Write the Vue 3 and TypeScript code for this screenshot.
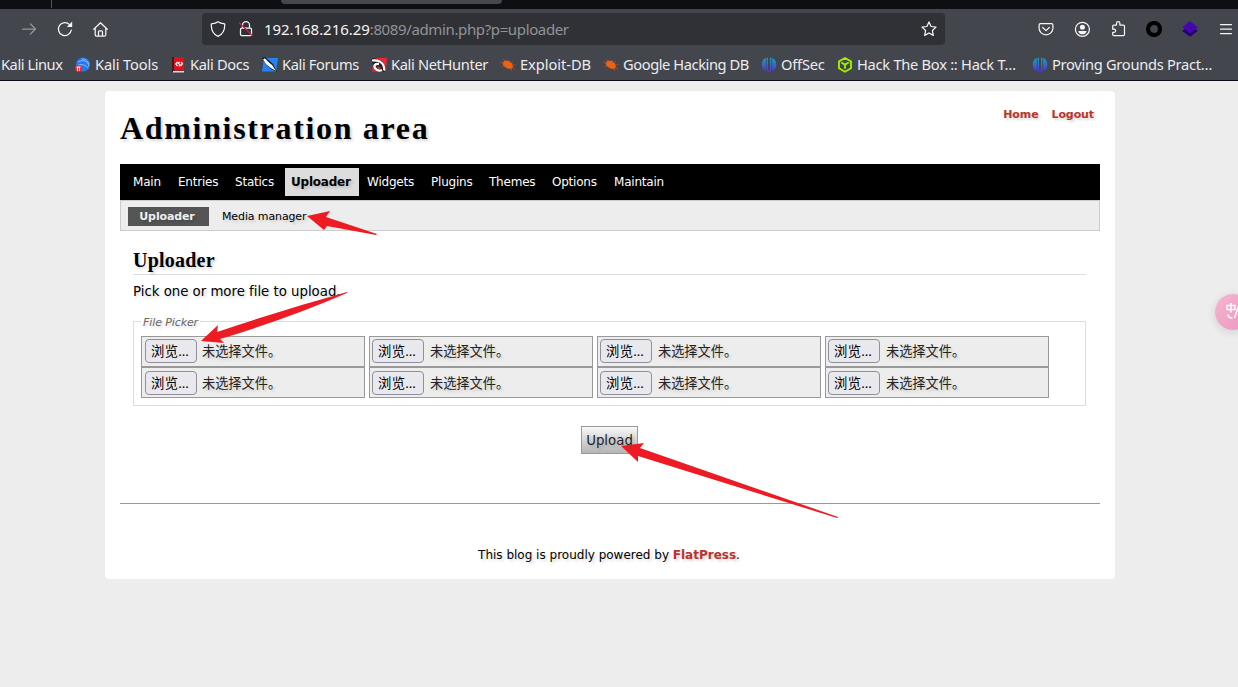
<script setup lang="ts">
interface Bookmark {
  label: string
  icon: string
  width: number
  tracking: number
}

interface Tab {
  label: string
  width: number
}

const bookmarks: Bookmark[] = [
  { label: 'Kali Linux', icon: '', width: 74, tracking: -0.45 },
  { label: 'Kali Tools', icon: 'tools', width: 95, tracking: -0.13 },
  { label: 'Kali Docs', icon: 'docs', width: 92, tracking: -0.35 },
  { label: 'Kali Forums', icon: 'forums', width: 109, tracking: -0.37 },
  { label: 'Kali NetHunter', icon: 'hunter', width: 129, tracking: -0.35 },
  { label: 'Exploit-DB', icon: 'bug', width: 103, tracking: -0.05 },
  { label: 'Google Hacking DB', icon: 'bug', width: 158, tracking: -0.42 },
  { label: 'OffSec', icon: 'offsec', width: 76, tracking: -0.2 },
  { label: 'Hack The Box :: Hack T…', icon: 'cube', width: 195, tracking: -0.27 },
  { label: 'Proving Grounds Pract…', icon: 'offsec', width: 190, tracking: -0.29 },
]

const tabs: Tab[] = [
  { label: 'Main', width: 45 },
  { label: 'Entries', width: 57 },
  { label: 'Statics', width: 56 },
  { label: 'Uploader', width: 76 },
  { label: 'Widgets', width: 64 },
  { label: 'Plugins', width: 58 },
  { label: 'Themes', width: 63 },
  { label: 'Options', width: 62 },
  { label: 'Maintain', width: 66 },
]
const activeTab = 'Uploader'
</script>

<template>
  <div class="window">
    <div class="tabstrip">
      <span class="tab-divider"></span>
      <span class="tab-current"></span>
    </div>

    <div class="toolbar">
      <div class="nav-buttons">
        <svg class="ico dim" viewBox="0 0 16 16"><path d="M1.500 8h13M9.500 3l5 5-5 5" /></svg>
        <svg class="ico" viewBox="0 0 16 16"><path d="M14.300 9.200A6.500 6.500 0 1 1 12.600 3.600" /><path class="solid" d="M15.200.6v5.400H9.800z" /></svg>
        <svg class="ico" viewBox="0 0 16 16"><path d="M.7 8.200 7.500 1.800l6.800 6.400M2.200 7.500v6.200q0 1.500 1.500 1.500h7.600q1.500 0 1.500-1.500V7.500M5.500 15V10.700q0-.9.9-.9h2.200q.9 0 .9.900V15" /></svg>
      </div>
      <div class="urlbar">
        <svg class="ico" viewBox="0 0 16 16"><path d="M8 .8C6.500 2.100 3.800 2.700 1.300 2.800 1 8.400 3 13.300 8 15.300c5-2 7-6.900 6.700-12.500C12.200 2.700 9.500 2.100 8 .8z" /></svg>
        <svg class="ico lock" viewBox="0 0 16 16"><path d="M4.500 7V4.200a3.500 3.500 0 0 1 7 0V7M3.800 7h8.400q1.300 0 1.300 1.300v5q0 1.300-1.300 1.300H3.800q-1.300 0-1.300-1.300v-5Q2.500 7 3.800 7z" /><path class="slash" d="M1.300 1.800l13 12.800" /></svg>
        <span class="url"><b>192.168.216.29</b>:8089/admin.php?p=uploader</span>
        <svg class="ico star" viewBox="0 0 16 16"><path d="M8 1l2.100 4.500 4.900.6-3.600 3.400.9 4.900L8 12l-4.300 2.400.9-4.900L1 6.100l4.900-.6z" /></svg>
      </div>
      <div class="actions">
        <svg class="ico" viewBox="0 0 16 16"><path d="M2.500 2.500h11q1.400 0 1.400 1.400v3.400a6.900 6.500 0 0 1-13.800 0V3.900q0-1.400 1.400-1.400zM4.700 6.500 8 9.600l3.300-3.100" /></svg>
        <svg class="ico" viewBox="0 0 16 16"><circle cx="8.400" cy="8.300" r="7" /><circle class="solid" cx="8.400" cy="6.200" r="2.500" /><path class="solid" d="M4.200 9.900h8.400Q11.900 13.300 8.400 13.300T4.200 9.900z" /></svg>
        <svg class="ico" viewBox="0 0 16 16"><path d="M2.700 5.200q0-1.200 1.200-1.200H6.500V2.400a1.700 1.700 0 0 1 3.400 0V4h3.400q1.200 0 1.200 1.200v8.300q0 1.200-1.200 1.200H3.900q-1.200 0-1.200-1.200v-2.100h1.300a1.600 1.600 0 0 0 0-3.200H2.700z" /></svg>
        <svg class="ico" viewBox="0 0 16 16"><circle class="ring" cx="8" cy="8" r="6" /></svg>
        <svg class="ico layers" viewBox="0 0 16 16"><path fill="#25006e" d="M0 9.800 3 8h10l3 1.800-8 6z" /><path fill="#4705b0" d="M8 0l7.700 6.300L8 12.600.3 6.300z" /></svg>
        <svg class="ico" viewBox="0 0 16 16"><path d="M2.500 3.500h11M2.500 8h11M2.500 12.500h11" /></svg>
      </div>
    </div>

    <div class="bookmarks">
      <div v-for="item in bookmarks" :key="item.label" class="bookmark" :style="{ width: item.width + 'px' }">
        <svg v-if="item.icon === 'tools'" class="fav" viewBox="0 0 16 16">
          <circle cx="8" cy="7.500" r="7" fill="#2878ed" />
          <path d="M3 5q5-3 8-.5t3 5M3 8q6-2 10.500 3.500M7 2q5 0 7 5" fill="none" stroke="#8cc0fb" stroke-width=".9" />
          <circle cx="3.500" cy="11.500" r="3.500" fill="#e72a38" /><path d="M1.500 10h4M2.500 10v4M4.500 10v4" stroke="#fff" fill="none" />
        </svg>
        <svg v-else-if="item.icon === 'docs'" class="fav" viewBox="0 0 16 16">
          <path d="M2 0h3v15H2z" fill="#30232b" /><path d="M4 0h10v13.500H4z" fill="#df101a" /><path d="M3 14h11v1.500H3z" fill="#ddd" />
          <path d="M11 5 12.500 6.800 10.500 9M7.500 5 5.800 7l1.700 2M9.500 4.800 8.300 6.200l1.700 1.600-1 1.600" stroke="#fff" stroke-width="1.200" fill="none" />
        </svg>
        <svg v-else-if="item.icon === 'forums'" class="fav" viewBox="0 0 16 16">
          <path d="M2 1h14l-2 13.500H0z" fill="#2482f4" /><path d="M0 1l3-1 8 7 4 8-6-3-5-5z" fill="#171e2a" /><path d="M1 2l9 6 4 6-5-3-5-4z" fill="#fff" /><path d="M2 2l8 8" stroke="#fff" stroke-width="2" />
        </svg>
        <svg v-else-if="item.icon === 'hunter'" class="fav" viewBox="0 0 16 16">
          <path d="M3 1h13l-1 13.500H1z" fill="#ee2631" /><path d="M0 2l4-1 7 3 4 6-1 5-7-1-4-4z" fill="#24202a" /><path d="M1 3.500q8-1 11 4 2 4 1 6" stroke="#fff" stroke-width="2.200" fill="none" /><path d="M8 7Q2 6.500 4 11q3 4 7 2" stroke="#fff" stroke-width="2.300" fill="none" /><path d="M6 9l5 2-4 1z" fill="#ee2631" />
        </svg>
        <svg v-else-if="item.icon === 'bug'" class="fav" viewBox="0 0 16 16">
          <path d="M2.500 6l2.500-2.500 4 .5 3 2.500 1 3-1.500 2.500-4-.5-4-2.500z" fill="#ef6216" />
          <path d="M.5 5l4 1M3 2.500l3 2M9 3l1 3M10 6l3-2M11.500 8.500l4-1M11 10l4 2M10 11l2 3M3 9l-1.500 1" stroke="#b5562a" stroke-width=".7" />
        </svg>
        <svg v-else-if="item.icon === 'offsec'" class="fav" viewBox="0 0 16 16">
          <defs><linearGradient id="indigo" x2="0" y2="1"><stop stop-color="#13a3bd" /><stop offset="1" stop-color="#5b25d5" /></linearGradient></defs>
          <path d="M4.800 1v13Q.7 12.500.7 7.500T4.800 1zM11.200 1v13q4.100-1.500 4.100-6.500T11.200 1zM5.600.7H7v14l-1.400-.4zM9 .7h1.400v13.600L9 14.700zM7 13h2v3l-1-.4z" fill="url(#indigo)" />
        </svg>
        <svg v-else-if="item.icon === 'cube'" class="fav" viewBox="0 0 16 16">
          <path d="M8 1l6 3.300v7L8 14.800l-6-3.500v-7zM4.300 5.500 8 7.600l3.700-2.100M8 7.600v4.200" fill="none" stroke="#9fef00" stroke-width="1.900" stroke-linejoin="round" />
        </svg>
        <span class="label" :style="{ letterSpacing: item.tracking + 'px' }">{{ item.label }}</span>
      </div>
    </div>

    <main class="page">
      <section class="sheet">
        <header class="head">
          <h1>Administration area</h1>
          <nav class="user-links"><a>Home</a><a>Logout</a></nav>
        </header>

        <nav class="main-menu">
          <div v-for="tab in tabs" :key="tab.label" class="slot" :style="{ width: tab.width + 'px' }">
            <a :class="{ active: tab.label === activeTab }">{{ tab.label }}</a>
          </div>
        </nav>
        <nav class="sub-menu">
          <a class="active">Uploader</a>
          <a>Media manager</a>
        </nav>

        <div class="content">
          <h2>Uploader</h2>
          <p class="intro">Pick one or more file to upload.</p>
          <div class="picker">
            <span class="legend">File Picker</span>
            <div v-for="n in 8" :key="n" class="file">
              <span class="browse">浏览…</span>
              <span class="status">未选择文件。</span>
            </div>
          </div>
          <button class="upload" type="button">Upload</button>
        </div>

        <footer>This blog is proudly powered by <a>FlatPress</a>.</footer>
      </section>
    </main>

    <div class="translate">
      <svg viewBox="0 0 24 36"><path d="M12 11.500h8v4h-8zM16 9v9.500M13 20.500q0 3.500 4.500 3.500M19.500 24l4.500-13" /></svg>
    </div>

    <svg class="arrows" viewBox="0 0 1238 687">
      <path d="M307 216l23-5-4 6 51 17-1 1-49-9-3 4z" />
      <path d="M201 341l17-16-1 7q65-22 130-40v1q-60 26-127 46l4 4z" />
      <path d="M621 446l23-3-4 5 198 69-1 1-199-62v6z" />
    </svg>
  </div>
</template>

<style>
body {
  background: #ededed;
  overflow: hidden;
}
</style>

<style scoped>
* { box-sizing: border-box; }
.window {
  position: relative;
  width: 1238px;
  height: 687px;
  overflow: hidden;
  background: #ededed;
  color: #000;
  font-family: "DejaVu Sans", "Noto Sans CJK SC", sans-serif;
}
.tabstrip { display: flex; height: 9px; background: #0e0f13; }
.tab-divider { width: 1px; height: 8px; margin-left: 51px; background: #54555b; }
.tab-current { width: 221px; height: 4px; margin-left: 229px; background: #46474e; border-radius: 0 0 4px 4px; }
.toolbar { display: flex; align-items: center; height: 40px; background: #44464d; }
.ico { display: block; width: 16px; height: 16px; flex: none; fill: none; stroke: #f5f5f5; stroke-width: 1.25; stroke-linecap: round; stroke-linejoin: round; }
.ico .solid { fill: #f5f5f5; stroke: none; }
.ico .slash { stroke: #df1747; stroke-width: 1.2; }
.ico .ring { stroke: #000; stroke-width: 4.2; }
.ico.layers { stroke: none; }
.dim { opacity: .45; }
.nav-buttons { display: flex; gap: 20px; width: 202px; padding-left: 21px; }
.urlbar { display: flex; align-items: center; width: 743px; height: 32px; padding: 0 8px; border-radius: 4px; background: #303136; }
.lock { margin-left: 12px; }
.url { flex: 1; margin-left: 10px; color: #929397; font: 15px/32px "Noto Sans", sans-serif; letter-spacing: -.37px; white-space: nowrap; }
.url b { color: #f5f5f5; font-weight: 400; letter-spacing: -.05px; }
.actions { display: flex; gap: 20px; margin-left: 93px; }
.bookmarks { display: flex; height: 32px; padding-left: 1px; background: #44464d; border-bottom: 1px solid #0d0914; }
.bookmark { display: flex; flex: none; align-items: center; gap: 4px; height: 31px; }
.fav { width: 16px; height: 16px; flex: none; }
.label { color: #ececed; font: 14.67px/31px "Noto Sans", sans-serif; white-space: nowrap; }
.page { padding-top: 10px; text-shadow: 2px 2px 3px rgba(0, 0, 0, .17); }
.sheet { width: 1010px; height: 488px; margin-left: 105px; padding: 0 15px; border-radius: 4px; background: #fff; }
.head { display: flex; justify-content: space-between; height: 73px; }
h1 { margin: 18px 0 0; font: bold 32px/38px "Liberation Serif", serif; letter-spacing: 1.67px; white-space: nowrap; }
a { color: #b9352c; font-weight: bold; }
.user-links { display: flex; gap: 13px; margin: 17px 6px 0 0; font-size: 11px; line-height: 14px; letter-spacing: -.1px; }
.main-menu { display: flex; align-items: center; height: 36px; padding-left: 7px; background: #000; font-size: 12px; letter-spacing: -.22px; }
.slot { display: flex; flex: none; }
.main-menu a { height: 28px; padding: 0 6px; color: #fff; font-weight: normal; line-height: 28px; }
.main-menu a.active { width: 74px; background: #ddd; color: #000; font-weight: bold; }
.sub-menu { display: flex; align-items: center; gap: 13px; height: 31px; padding: 1px 0 0 7px; border: 1px solid #ccc; background: #ededed; font-size: 11px; line-height: 19px; letter-spacing: -.12px; }
.sub-menu a { color: #000; font-weight: normal; }
.sub-menu a.active { width: 81px; padding-right: 3px; background: #555; color: #eee; font-weight: bold; text-align: center; }
.content { display: flex; flex-direction: column; height: 273px; padding: 18px 14px 0 13px; border-bottom: 1px solid #999; }
h2 { height: 26px; margin: 0; border-bottom: 1px solid #ddd; font: bold 20px/23px "Liberation Serif", serif; letter-spacing: .22px; }
.intro { margin: 8px 0 0; font-size: 13.33px; line-height: 18px; letter-spacing: -.02px; }
.picker { position: relative; display: grid; grid-template-columns: repeat(4, 224px); grid-auto-rows: 31px; column-gap: 4px; height: 85px; margin-top: 20px; padding: 14px 7px; border: 1px solid #ddd; }
.legend { position: absolute; top: -7px; left: 7px; padding: 0 2px; background: #fff; color: #666; font-size: 11px; font-style: italic; line-height: 16px; letter-spacing: -.1px; }
.file { display: flex; align-items: flex-start; padding: 2px 0 0 2px; border: 1px solid #999; background: #ededed; font: 13.2px/24px "Noto Sans CJK SC", sans-serif; color: #222; }
.file:nth-of-type(4n + 1) { padding-left: 3px; }
.file:nth-of-type(n + 5) { padding-top: 3px; }
.browse { width: 52px; height: 24px; padding-left: 5px; border: 1px solid #8f8f9d; border-radius: 4px; background: #e9e9ed; color: #000; font: 13.33px/22px "Noto Sans", "Noto Sans CJK SC", sans-serif; letter-spacing: .3px; text-shadow: none; }
.status { margin-left: 6px; }
.file:nth-of-type(4n + 1) .status { margin-left: 5px; }
.upload { align-self: center; width: 57px; height: 28px; margin-top: 20px; padding: 0; border: 1px solid #999; background: linear-gradient(#f8f8f8, #b5b5b5); color: #222; font: 13.33px "DejaVu Sans", sans-serif; text-shadow: inherit; }
footer { padding: 42px 2px 0 0; font-size: 12px; line-height: 18px; text-align: center; }
.translate { position: absolute; top: 294px; left: 1215px; width: 36px; height: 36px; border-radius: 18px; background: linear-gradient(135deg, #f5b6d1, #ec96be); box-shadow: 0 2px 10px rgba(0, 0, 0, .12); }
.translate svg { width: 24px; height: 36px; fill: none; stroke: #fff; stroke-width: 1.5; }
.arrows { position: absolute; inset: 0; width: 1238px; height: 687px; fill: #ed1c24; pointer-events: none; }
</style>
